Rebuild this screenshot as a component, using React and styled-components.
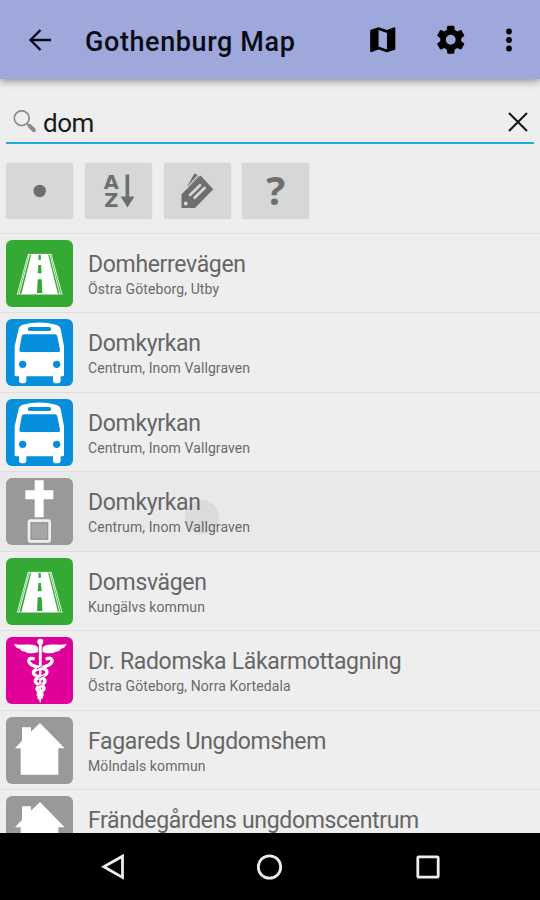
import React, { useState } from "react";
import styled, { createGlobalStyle } from "styled-components";

const places = [
  { name: "Domherrevägen", area: "Östra Göteborg, Utby", type: "road" },
  { name: "Domkyrkan", area: "Centrum, Inom Vallgraven", type: "bus" },
  { name: "Domkyrkan", area: "Centrum, Inom Vallgraven", type: "bus" },
  { name: "Domkyrkan", area: "Centrum, Inom Vallgraven", type: "church", pressed: true },
  { name: "Domsvägen", area: "Kungälvs kommun", type: "road" },
  { name: "Dr. Radomska Läkarmottagning", area: "Östra Göteborg, Norra Kortedala", type: "doctor" },
  { name: "Fagareds Ungdomshem", area: "Mölndals kommun", type: "house" },
  { name: "Frändegårdens ungdomscentrum", type: "house" },
];

const colors = {
  road: "#34aa35",
  bus: "#078fdb",
  church: "#999999",
  doctor: "#e0009a",
  house: "#999999",
};

// Category drawings, all on a 201 x 201 grid
const drawings = {
  road: (
    <>
      <path d="M76 42H126L156 163H46Z" fill="#fff" />
      <path d="M71 42L39 163M67 42L34 163M131 42L162 163M135 42L168 163" stroke="#fff" strokeWidth="2.6" />
      <path d="M66 43H136M33 162H169" stroke="#fff" strokeWidth="2" />
      <path d="M98 44h6l1 15h-8zM97 75h8l2 25h-12zM95 118h12l2 41h-16z" fill="#34aa35" />
    </>
  ),
  bus: (
    <>
      <path
        d="M38 30Q39 21 51 17Q100 4 150 17Q162 21 164 30L174 82V169Q174 172 170 172H164V186Q163 193 153 193Q142 193 141 186V172H61V186Q60 193 50 193Q40 193 39 186V172H30Q26 172 26 168V82Z"
        fill="#fff"
      />
      <rect x="66" y="24" width="69" height="12" rx="5" fill="#078fdb" />
      <path d="M54 46H147Q153 46 154 52L162 92Q163 99 156 99H45Q39 99 40 92L47 52Q48 46 54 46Z" fill="#078fdb" />
      <circle cx="50" cy="136" r="11" fill="#078fdb" />
      <circle cx="152" cy="136" r="11" fill="#078fdb" />
    </>
  ),
  church: (
    <>
      <path d="M86 7H113V37H142V64H113V118H86V64H58V37H86Z" fill="#fff" />
      <rect x="69" y="128" width="62" height="62" rx="3" fill="#a6a6a6" stroke="#eeeeee" strokeWidth="8" />
      <rect x="76" y="135" width="48" height="48" fill="none" stroke="#949494" strokeWidth="3" />
    </>
  ),
  doctor: (
    <>
      <path d="M98 33C84 15 53 27 24 21C28 33 38 34 42 36C45 44 53 43 58 44C66 51 83 50 98 44Z" fill="#fff" />
      <path d="M108 33C122 15 153 27 182 21C178 33 168 34 164 36C161 44 153 43 148 44C140 51 123 50 108 44Z" fill="#fff" />
      <circle cx="103" cy="14" r="9" fill="#fff" />
      <path d="M98 14H108L105 192L103 199L100 192Z" fill="#fff" />
      <path d="M97 25V50M109 25V50" stroke="#e0009a" strokeWidth="2" />
      <g fill="none" stroke="#fff" strokeWidth="10" strokeLinecap="round">
        <path d="M82 65C68 60 63 73 76 83C91 94 129 91 122 109C116 122 85 118 88 134C91 146 117 142 114 156C110 166 95 164 97 174L106 181" />
        <path d="M123 65C139 60 144 73 130 83C115 94 77 94 83 110C88 122 120 120 117 134C114 145 91 145 93 157C96 167 110 165 108 174L99 182" />
      </g>
      <path d="M92 96L109 88M98 124L114 116M96 147L110 140" stroke="#e0009a" strokeWidth="2.5" />
    </>
  ),
  house: <path d="M102 18L176 94H157V173H44V94H27L48 71V31H75V44Z" fill="#fff" />,
};

export default function App() {
  const [query, setQuery] = useState("dom");

  return (
    <Screen>
      <GlobalStyle />
      <Header>
        <BackButton aria-label="Back">
          <svg width="24" height="24" viewBox="0 0 24 24" fill="none" stroke="#080a16" strokeWidth="2.3">
            <path d="M23 12H2.5M12.5 2L2.5 12L12.5 22" />
          </svg>
        </BackButton>
        <Title>Gothenburg Map</Title>
        <Actions>
          <svg width="33.5" height="33.5" viewBox="0 0 24 24">
            <path d="M20.5 3l-.16.03L15 5.1 9 3 3.36 4.9c-.21.07-.36.25-.36.48V20.5c0 .28.22.5.5.5l.16-.03L9 18.9l6 2.1 5.64-1.9c.21-.07.36-.25.36-.48V3.5c0-.28-.22-.5-.5-.5zM15 19l-6-2.11V5l6 2.11V19z" />
          </svg>
          <svg width="33.5" height="33.5" viewBox="0 0 24 24">
            <path d="M19.43 12.98c.04-.32.07-.64.07-.98s-.03-.66-.07-.98l2.11-1.65c.19-.15.24-.42.12-.64l-2-3.46c-.12-.22-.39-.3-.61-.22l-2.49 1c-.52-.4-1.08-.73-1.69-.98l-.38-2.65C14.46 2.18 14.25 2 14 2h-4c-.25 0-.46.18-.49.42l-.38 2.65c-.61.25-1.17.59-1.69.98l-2.49-1c-.23-.09-.49 0-.61.22l-2 3.46c-.13.22-.07.49.12.64l2.11 1.65c-.04.32-.07.65-.07.98s.03.66.07.98l-2.11 1.65c-.19.15-.24.42-.12.64l2 3.46c.12.22.39.3.61.22l2.49-1c.52.4 1.08.73 1.69.98l.38 2.65c.03.24.24.42.49.42h4c.25 0 .46-.18.49-.42l.38-2.65c.61-.25 1.17-.59 1.69-.98l2.49 1c.23.09.49 0 .61-.22l2-3.46c.12-.22.07-.49-.12-.64l-2.11-1.65zM12 15.5c-1.93 0-3.5-1.57-3.5-3.5s1.57-3.5 3.5-3.5 3.5 1.57 3.5 3.5-1.57 3.5-3.5 3.5z" />
          </svg>
          <svg width="8" height="34" viewBox="0 0 8 34">
            <circle cx="4" cy="8.5" r="2.9" />
            <circle cx="4" cy="17" r="2.9" />
            <circle cx="4" cy="25.5" r="2.9" />
          </svg>
        </Actions>
      </Header>

      <SearchBar>
        <svg width="24" height="24" viewBox="0 0 24 24" fill="none" stroke="#8b8b8b">
          <circle cx="8.7" cy="8.2" r="7.4" strokeWidth="1.7" />
          <path d="M14 13.5L17 16.5" strokeWidth="2" />
          <path d="M16.8 16.3L20.8 20" strokeWidth="4.2" strokeLinecap="round" />
        </svg>
        <SearchInput value={query} onChange={(e) => setQuery(e.target.value)} />
        <ClearButton aria-label="Clear" onClick={() => setQuery("")}>
          <svg width="20" height="20" viewBox="0 0 20 20" stroke="#111" strokeWidth="2">
            <path d="M1 1L19 19M19 1L1 19" />
          </svg>
        </ClearButton>
      </SearchBar>

      <Filters>
        <FilterButton>
          <svg width="67" height="56" viewBox="0 0 67 56">
            <circle cx="33.7" cy="28" r="6.2" />
          </svg>
        </FilterButton>
        <FilterButton>
          <svg width="67" height="56" viewBox="0 0 67 56">
            <SortLetter x="26.2" y="26">A</SortLetter>
            <SortLetter x="26.2" y="44">Z</SortLetter>
            <path d="M40.6 11.5h3.6v22h5.2l-6.9 11-6.9-11h5z" />
          </svg>
        </FilterButton>
        <FilterButton>
          <svg width="67" height="56" viewBox="0 0 67 56">
            <path d="M17.5 31.2L36.5 12.5L49.3 26.3L31 45H17.5Z" />
            <path d="M23 23.5L29.8 11.5Q31 10 33.5 12L35 13.2L25 24Z" />
            <path d="M23.3 24.3L34.2 12.2" stroke="#d6d8d7" strokeWidth="1.2" />
            <path d="M26 32L36 22.2M30.6 34.8L40.8 24.8" stroke="#d6d8d7" strokeWidth="2.6" strokeLinecap="round" />
            <circle cx="21.7" cy="40.6" r="2" fill="#d6d8d7" />
          </svg>
        </FilterButton>
        <FilterButton>
          <Question>?</Question>
        </FilterButton>
      </Filters>

      <List>
        {places.map((place, i) => (
          <Row key={i} $pressed={place.pressed}>
            <Tile $color={colors[place.type]}>
              <svg width="67" height="67" viewBox="0 0 201 201">
                {drawings[place.type]}
              </svg>
            </Tile>
            <RowText>
              <Name>{place.name}</Name>
              {place.area && <Area>{place.area}</Area>}
            </RowText>
            {place.pressed && <Ripple />}
          </Row>
        ))}
      </List>

      <NavBar>
        <svg width="26" height="28" viewBox="0 0 26 28">
          <path d="M23.5 3.2V24.4L4.8 13.8Z" />
        </svg>
        <svg width="26" height="28" viewBox="0 0 26 28">
          <circle cx="12.5" cy="14" r="11.2" />
        </svg>
        <svg width="26" height="28" viewBox="0 0 26 28">
          <rect x="2.8" y="3.8" width="20.4" height="20.4" rx="1" />
        </svg>
      </NavBar>
    </Screen>
  );
}

// Styles
const GlobalStyle = createGlobalStyle`
  * {
    box-sizing: border-box;
  }

  body {
    margin: 0;
    background: #eeeeee;
    font-family: Roboto, "Noto Sans", sans-serif;
  }

  svg {
    display: block;
    flex-shrink: 0;
  }
`;

const Screen = styled.div`
  display: flex;
  flex-direction: column;
  width: 540px;
  height: 900px;
  overflow: hidden;
  background: #eeeeee;
`;

const Header = styled.header`
  display: flex;
  align-items: center;
  flex-shrink: 0;
  height: 79px;
  padding: 0 27px 0 28px;
  background: #9fa8da;
  box-shadow: 0 2px 8px rgba(0, 0, 0, 0.42);
`;

const BackButton = styled.button`
  width: 57px;
  padding: 0;
  border: none;
  background: none;
`;

const Title = styled.h1`
  flex: 1;
  margin: 4px 0 0;
  font-size: 27px;
  font-weight: 500;
  line-height: 32px;
  letter-spacing: 0.6px;
  white-space: nowrap;
  color: #0a0c18;
`;

const Actions = styled.div`
  display: flex;
  align-items: center;
  gap: 34px;
  margin-top: 1px;

  svg:last-child {
    margin-left: 4px;
  }
`;

const SearchBar = styled.div`
  display: flex;
  align-items: center;
  flex-shrink: 0;
  height: 43px;
  margin: 22px 6px 0;
  padding: 0 6.5px 0 7px;
  border-bottom: 2.5px solid #24abdd;
`;

const SearchInput = styled.input`
  flex: 1;
  min-width: 0;
  height: 36px;
  margin-left: 6px;
  padding: 2px 0 0;
  border: none;
  outline: none;
  background: none;
  font-family: Roboto, sans-serif;
  font-size: 26px;
  letter-spacing: -0.5px;
  color: #1b1b1b;
`;

const ClearButton = styled.button`
  padding: 0;
  border: none;
  background: none;
`;

const Filters = styled.div`
  display: flex;
  flex-shrink: 0;
  gap: 11.8px;
  padding: 19px 6px 14px;
`;

const FilterButton = styled.button`
  display: flex;
  align-items: center;
  justify-content: center;
  width: 67px;
  height: 56px;
  padding: 0;
  border: none;
  border-radius: 2px;
  background: #d6d8d7;
  box-shadow: 0 0 2px rgba(0, 0, 0, 0.08);
  fill: #6e6e6e;
  color: #6e6e6e;
`;

const SortLetter = styled.text`
  font-family: "DejaVu Sans", sans-serif;
  font-size: 19.5px;
  font-weight: 700;
  text-anchor: middle;
`;

const Question = styled.span`
  margin-top: -2px;
  font-family: "Open Sans", sans-serif;
  font-size: 40px;
  font-weight: 700;
  line-height: 40px;
`;

const List = styled.div`
  flex: 1;
  min-height: 0;
  overflow: hidden;
`;

const Row = styled.div`
  position: relative;
  display: flex;
  height: 79.45px;
  padding: 6px 6px 0;
  border-top: 1.5px solid #dfdfdf;
  background: ${(props) => (props.$pressed ? "#e9e9e9" : "#eeeeee")};
`;

const Tile = styled.div`
  flex-shrink: 0;
  width: 67px;
  height: 67px;
  border-radius: 6px;
  overflow: hidden;
  background: ${(props) => props.$color};
`;

const RowText = styled.div`
  margin: 11px 0 0 15px;
  white-space: nowrap;
`;

const Name = styled.div`
  font-size: 23px;
  line-height: 28px;
  letter-spacing: -0.33px;
  color: #666666;
`;

const Area = styled.div`
  margin-top: 1px;
  font-size: 14px;
  line-height: 18px;
  letter-spacing: 0.1px;
  color: #6a6a6a;
`;

// touch feedback
const Ripple = styled.div`
  position: absolute;
  top: 28px;
  left: 185px;
  width: 34px;
  height: 34px;
  border-radius: 50%;
  background: rgba(0, 0, 0, 0.06);
`;

const NavBar = styled.nav`
  display: flex;
  align-items: center;
  justify-content: space-between;
  flex-shrink: 0;
  height: 67px;
  padding: 0 99px 0 99px;
  background: #000;
  fill: none;
  stroke: #ededed;
  stroke-width: 2.8;
`;
